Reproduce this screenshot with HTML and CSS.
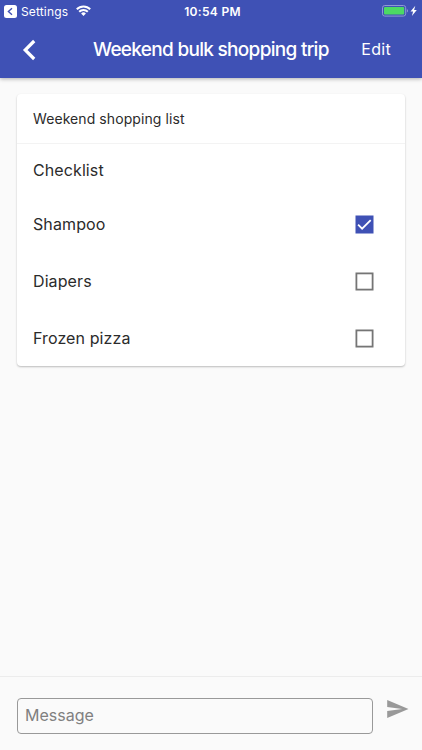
FILE: index.html
```html
<!DOCTYPE html>
<html lang="en">
<head>
  <meta charset="UTF-8" />
  <meta name="viewport" content="width=device-width, initial-scale=1.0"/>
  <title>Weekend bulk shopping trip</title>
  <link rel="stylesheet" href="styles.css">
</head>
<body>
  <header class="header">
    <div class="status-bar">
      <div class="status-left">
        <svg class="return-icon" width="13" height="13" viewBox="0 0 13 13">
          <rect width="13" height="13" rx="2.5" fill="#fff"/>
          <path d="M8 3.2L4.4 6.5 8 9.8" fill="none" stroke="#3f51b5" stroke-width="1.4"/>
        </svg>
        <span class="status-app">Settings</span>
        <svg class="wifi-icon" width="15" height="11" viewBox="0 0 15 11">
          <g fill="none" stroke="#fff" stroke-width="2">
            <path d="M.8 4.2a9.4 9.4 0 0 1 13.4 0"/>
            <path d="M3.2 6.8a6 6 0 0 1 8.6 0"/>
          </g>
          <path d="M5.1 8.4a3.4 3.4 0 0 1 4.8 0L7.5 10.9z" fill="#fff"/>
        </svg>
      </div>
      <span class="status-time">10:54 PM</span>
      <div class="status-right">
        <svg width="36" height="12" viewBox="0 0 36 12">
          <rect x=".5" y=".5" width="23.2" height="10.6" rx="2.3" fill="none" stroke="#8f99d3"/>
          <rect x="2" y="2" width="20.2" height="7.6" rx="1" fill="#4cd964"/>
          <path d="M24.9 4v3.6q1.1-.6 1.1-1.8t-1.1-1.8z" fill="#8f99d3"/>
          <path d="M33.3.8l-4.8 5.8h2.6l-1.2 4.3 4.9-5.9h-2.7z" fill="#fff"/>
        </svg>
      </div>
    </div>
    <div class="toolbar">
      <button class="back-button" aria-label="Back">
        <svg width="14" height="22" viewBox="0 0 14 22">
          <path d="M12.2 2L3.2 11l9 9" fill="none" stroke="#fff" stroke-width="3.2"/>
        </svg>
      </button>
      <h1 class="title">Weekend bulk shopping trip</h1>
      <button class="edit-button">Edit</button>
    </div>
  </header>

  <main class="content">
    <section class="card">
      <div class="card-header">Weekend shopping list</div>
      <div class="list-title">Checklist</div>
      <label class="item">
        <span class="item-name">Shampoo</span>
        <svg width="19" height="19" viewBox="0 0 19 19">
          <rect x=".5" y=".5" width="18" height="18" fill="#3f51b5"/>
          <path d="M3.1 9.7l4 4 8.6-8.6" fill="none" stroke="#fff" stroke-width="1.8"/>
        </svg>
      </label>
      <label class="item">
        <span class="item-name">Diapers</span>
        <svg width="19" height="19" viewBox="0 0 19 19">
          <rect x="1.4" y="1.4" width="16.2" height="16.2" fill="none" stroke="#757575" stroke-width="1.8"/>
        </svg>
      </label>
      <label class="item">
        <span class="item-name">Frozen pizza</span>
        <svg width="19" height="19" viewBox="0 0 19 19">
          <rect x="1.4" y="1.4" width="16.2" height="16.2" fill="none" stroke="#757575" stroke-width="1.8"/>
        </svg>
      </label>
    </section>
  </main>

  <footer class="message-bar">
    <input class="message-input" type="text" placeholder="Message" />
    <button class="send-button" aria-label="Send">
      <svg width="22" height="18" viewBox="0 0 22 18">
        <path d="M.2 18L21.5 9 .2 0v7l15 2-15 2z" fill="#999"/>
      </svg>
    </button>
  </footer>
</body>
</html>
```
FILE: styles.css
```css
* {
  box-sizing: border-box;
}
body {
  margin: 0;
  height: 100vh;
  display: flex;
  flex-direction: column;
  overflow: hidden;
  background: #fafafa;
  color: #2b2b2b;
  font-family: Inter, Roboto, sans-serif;
}
svg {
  display: block;
}
button {
  border: 0;
  padding: 0;
  background: none;
  color: inherit;
  font: inherit;
}
.header {
  height: 78px;
  flex: none;
  background: #3f51b5;
  color: #fff;
  box-shadow: 0 1px 4px rgba(0, 0, 0, 0.3);
}
.status-bar {
  height: 22px;
  display: grid;
  grid-template-columns: 1fr auto 1fr;
  align-items: center;
  padding: 0 4px;
  font-size: 12px;
}
.status-left {
  display: flex;
  align-items: center;
}
.status-app {
  margin: 0 8px 0 4px;
  letter-spacing: 0.15px;
}
.status-time {
  padding-left: 3px;
  font-weight: 600;
  letter-spacing: 0.3px;
}
.wifi-icon {
  margin-bottom: 1px;
}
.status-right {
  display: flex;
  justify-content: flex-end;
  padding-bottom: 1px;
}
.toolbar {
  height: 55px;
  display: flex;
  align-items: center;
  padding: 0 31px 0 22px;
}
.title {
  flex: 1;
  margin: 0 0 0 57px;
  font-size: 19px;
  font-weight: 500;
  letter-spacing: -0.7px;
  white-space: nowrap;
}
.edit-button {
  padding-bottom: 1px;
  font-size: 16px;
  letter-spacing: 0.3px;
}
.content {
  flex: 1;
  padding: 16px 17px;
}
.card {
  height: 272px;
  background: #fff;
  border-radius: 4px;
  box-shadow: 0 1px 2px rgba(0, 0, 0, 0.25);
}
.card-header {
  height: 50px;
  padding: 0 16px;
  border-bottom: 1px solid #f3f3f3;
  font-size: 14px;
  line-height: 49px;
  letter-spacing: 0.08px;
}
.list-title {
  height: 52px;
  padding: 0 16px;
  font-size: 16px;
  line-height: 52px;
  letter-spacing: 0.1px;
}
.item {
  height: 57px;
  display: flex;
  align-items: center;
  justify-content: space-between;
  padding: 0 31px 0 16px;
  font-size: 16px;
  letter-spacing: 0.1px;
}
.item-name {
  padding-bottom: 2px;
}
.message-bar {
  height: 74px;
  flex: none;
  display: flex;
  align-items: flex-start;
  padding: 21px 13px 0 17px;
  border-top: 1px solid #ececec;
}
.message-input {
  width: 356px;
  height: 36px;
  padding: 0 7px 3px;
  border: 1px solid #999;
  border-radius: 4px;
  background: transparent;
  font-family: inherit;
  font-size: 16px;
}
.message-input::placeholder {
  color: #808080;
}
.send-button {
  margin: 2px 0 0 14px;
}
```
